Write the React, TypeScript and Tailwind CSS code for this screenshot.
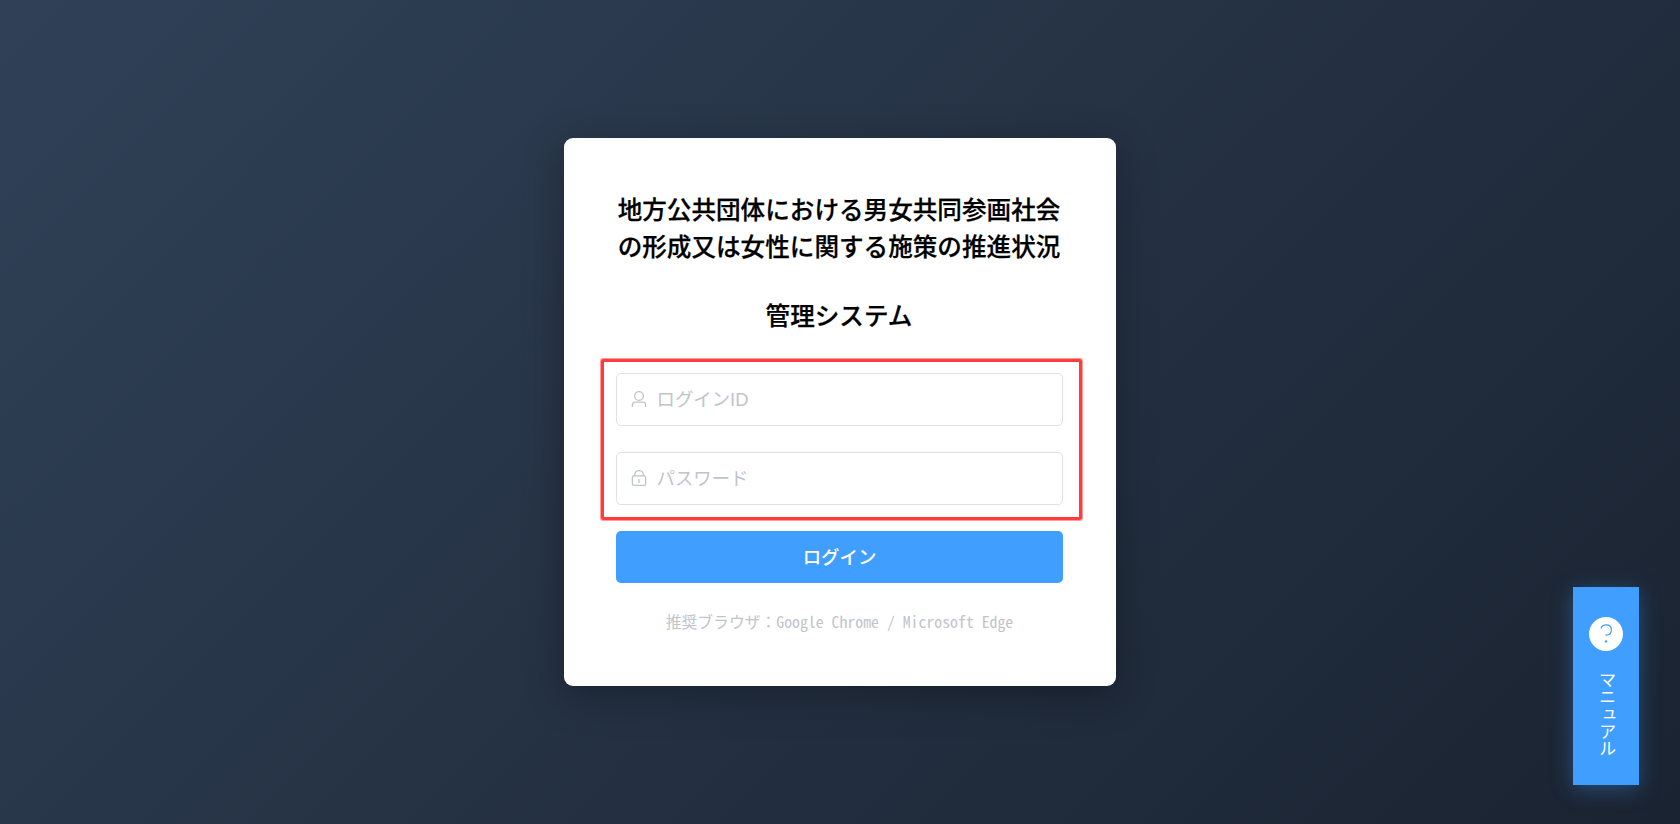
const UserIcon = () => (
  <svg viewBox="0 0 16 16" className="w-4 h-4 mb-0.5 shrink-0" fill="none" stroke="currentColor" strokeWidth="1.3">
    <circle cx="8" cy="5" r="4.4" />
    <path d="M1.4 15.9V13.9A2.8 2.8 0 0 1 4.2 11.1H11.8A2.8 2.8 0 0 1 14.6 13.9V15.9" />
  </svg>
);

const LockIcon = () => (
  <svg viewBox="0 0 16 16" className="w-4 h-4 mb-0.5 shrink-0" fill="none" stroke="currentColor" strokeWidth="1.3">
    <rect x="1.4" y="5.9" width="13.2" height="9.5" rx="1.5" />
    <path d="M3.7 5.9V4.7A4.3 4.1 0 0 1 12.3 4.7V5.9M8 9.1V12.9" />
  </svg>
);

const HelpIcon = () => (
  <svg viewBox="0 0 34 34" className="w-[34px] h-[34px]" fill="none">
    <circle cx="17" cy="17" r="17" fill="#fff" />
    <path
      d="M12 11.5C12.6 9.1 14.6 7.8 17.2 7.8C20.4 7.8 22.4 9.9 22.4 12.9C22.4 16.2 20.2 18 17.2 18.1H16.4"
      stroke="#409eff"
      strokeWidth="1.2"
    />
    <circle cx="17" cy="24.4" r="1.2" fill="#409eff" />
  </svg>
);

const Field = ({
  icon,
  type,
  placeholder,
}: {
  icon: React.ReactNode;
  type: string;
  placeholder: string;
}) => {
  return (
    <label className="flex items-center h-[53px] gap-2.5 pl-[14px] pr-4 rounded-[5px] border border-[#dfe1e9] text-[#c0c4cc]">
      {icon}
      <input
        type={type}
        placeholder={placeholder}
        className="w-full min-w-0 bg-transparent outline-none text-[18.4px] placeholder:text-[#c0c4cc]"
      />
    </label>
  );
};

const App = () => {
  return (
    <main className="relative flex h-[824px] w-full justify-center overflow-hidden bg-[linear-gradient(135deg,#304157_0%,#1a2331_100%)] pt-[138px] font-['Liberation_Sans','Noto_Sans_CJK_JP',sans-serif]">
      <section className="relative -left-[0.5px] h-[548px] w-[552px] rounded-[9px] bg-white pl-[52px] pr-[53px] shadow-[0_9px_40px_rgba(0,0,0,0.3)]">
        <h1 className="pt-[54px] text-center text-[24.6px] leading-[37px] font-medium text-black whitespace-nowrap [-webkit-text-stroke:0.25px_#000]">
          地方公共団体における男女共同参画社会
          <br />
          の形成又は女性に関する施策の推進状況
        </h1>
        <h2 className="mt-8 text-center text-[24.6px] leading-[37px] font-medium text-black [-webkit-text-stroke:0.25px_#000]">
          管理システム
        </h2>

        <form className="mt-[38px] flex flex-col gap-[26px]">
          <Field icon={<UserIcon />} type="text" placeholder="ログインID" />
          <Field icon={<LockIcon />} type="password" placeholder="パスワード" />
          <button
            type="button"
            className="h-[52px] rounded-[5px] bg-[#409eff] pt-0.5 pl-px text-[18.4px] font-medium text-white"
          >
            ログイン
          </button>
        </form>

        <p className="mt-[26.5px] flex h-6 items-center justify-center pl-px font-['Noto_Sans_CJK_JP',sans-serif] text-[15.8px] text-[#c0c4cc] whitespace-nowrap">
          <span>推奨ブラウザ：</span>
          <span className="[font-feature-settings:'hwid']">Google Chrome / Microsoft Edge</span>
        </p>

        {/* highlight around the credential fields */}
        <div className="pointer-events-none absolute top-[221px] left-[37.5px] h-[161px] w-[481px] rounded-[2px] border-[3px] border-[#ff3b3b] shadow-[0_0_0_1px_rgba(255,59,59,0.5)]" />
      </section>

      <button
        type="button"
        className="absolute top-[587px] left-[1573px] flex h-[198px] w-[66px] flex-col items-center bg-[#409eff] pt-[30px] text-white shadow-[0_4px_20px_rgba(64,158,255,0.35)]"
      >
        <HelpIcon />
        <span className="mt-[20px] mr-px text-[17.2px] leading-none [writing-mode:vertical-rl]">
          マニュアル
        </span>
      </button>
    </main>
  );
};

export default App;
